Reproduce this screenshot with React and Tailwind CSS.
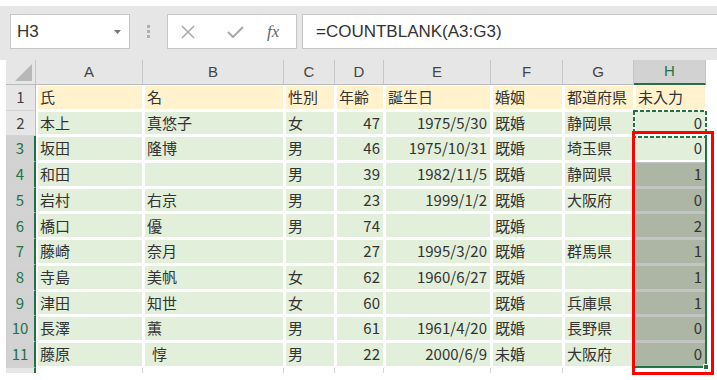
import clsx from "clsx";

const cols = ["A", "B", "C", "D", "E", "F", "G", "H"];
const widths = ["w-[107px]", "w-[141px]", "w-[51px]", "w-[49px]", "w-[107px]", "w-[72px]", "w-[71px]", "w-[72px]"];

const header = ["氏", "名", "性別", "年齢", "誕生日", "婚姻", "都道府県", "未入力"];

const rows = [
  ["本上", "真悠子", "女", 47, "1975/5/30", "既婚", "静岡県", 0],
  ["坂田", "隆博", "男", 46, "1975/10/31", "既婚", "埼玉県", 0],
  ["和田", "", "男", 39, "1982/11/5", "既婚", "静岡県", 1],
  ["岩村", "右京", "男", 23, "1999/1/2", "既婚", "大阪府", 0],
  ["橋口", "優", "男", 74, "", "既婚", "", 2],
  ["藤崎", "奈月", "", 27, "1995/3/20", "既婚", "群馬県", 1],
  ["寺島", "美帆", "女", 62, "1960/6/27", "既婚", "", 1],
  ["津田", "知世", "女", 60, "", "既婚", "兵庫県", 1],
  ["長澤", "薫", "男", 61, "1961/4/20", "既婚", "長野県", 0],
  ["藤原", "惇", "男", 22, "2000/6/9", "未婚", "大阪府", 0],
];

const rightAligned = [3, 4, 7];

function RowHeader({ n, selected }) {
  return (
    <div
      className={clsx(
        "w-[30px] h-full shrink-0 flex items-center justify-center border-b border-[#d4d4d4] text-[15px]",
        selected
          ? "bg-[#d2d2d2] text-[#217346] border-r-2 border-r-[#217346]"
          : "bg-[#e6e6e6] text-[#444] border-r border-r-[#bdbdbd]"
      )}
    >
      {n}
    </div>
  );
}

function Cell({ value, col, header, row }) {
  const inSel = col === 7 && row >= 4;
  return (
    <div
      className={clsx(
        "h-full shrink-0 flex items-center border-l-2 border-r border-t border-b-2 whitespace-nowrap",
        widths[col],
        header ? "bg-[#fff2cc]" : inSel ? "bg-[#adb5a4]" : "bg-[#e2efda]",
        inSel ? "border-[#c4c4c4]" : "border-white",
        !header && rightAligned.includes(col) ? "justify-end pr-[3px]" : "pl-[2px]",
        col === 1 && row === 11 && "pl-[7px]"
      )}
    >
      {value}
    </div>
  );
}

export default function App() {
  return (
    <div className="w-[717px] h-[380px] bg-white overflow-hidden relative font-['Liberation_Sans',sans-serif]">
      <div className="h-[6px] bg-white" />

      {/* formula bar */}
      <div className="h-[54px] bg-[#e6e6e6] flex items-start pt-[8px] pl-[10px] gap-0">
        <div className="w-[120px] h-[35px] bg-white border border-[#c6c6c6] flex items-center pl-[6px] pr-[8px] justify-between">
          <span className="text-[17px] text-[#333]">H3</span>
          <svg width="7" height="4" viewBox="0 0 7 4">
            <polygon points="0,0 7,0 3.5,4" fill="#777" />
          </svg>
        </div>
        <div className="w-[37px] h-[35px] flex items-center justify-center">
          <svg width="3" height="13" viewBox="0 0 3 13">
            <rect x="0" y="0" width="3" height="3" fill="#b0b0b0" />
            <rect x="0" y="5" width="3" height="3" fill="#b0b0b0" />
            <rect x="0" y="10" width="3" height="3" fill="#b0b0b0" />
          </svg>
        </div>
        <div className="w-[130px] h-[35px] bg-white border border-[#c6c6c6] flex items-center">
          <svg width="14" height="14" viewBox="0 0 14 14" className="ml-[13px]">
            <path d="M1 1 L13 13 M13 1 L1 13" stroke="#a8a8a8" strokeWidth="1.5" fill="none" />
          </svg>
          <svg width="17" height="12" viewBox="0 0 17 12" className="ml-[32px]">
            <path d="M1 6 L6 11 L16 1" stroke="#a8a8a8" strokeWidth="2" fill="none" />
          </svg>
          <span className="ml-[23px] text-[17px] italic text-[#666] font-['Liberation_Serif',serif]">fx</span>
        </div>
        <div className="ml-[5px] flex-1 h-[35px] bg-white border border-r-0 border-[#c6c6c6] flex items-center pl-[13px]">
          <span className="text-[17px] text-[#333]">=COUNTBLANK(A3:G3)</span>
        </div>
      </div>

      {/* column headers */}
      <div className="flex h-[25px] pl-[6px]">
        <div className="w-[30px] h-full bg-[#e6e6e6] border-b border-[#bcbcbc] border-r border-r-[#c6c6c6] flex items-end justify-end pr-[3px] pb-[3px]">
          <svg width="17" height="17" viewBox="0 0 17 17">
            <polygon points="17,0 17,17 0,17" fill="#b8b8b8" />
          </svg>
        </div>
        {cols.map((c, i) => (
          <div
            key={c}
            className={clsx(
              "h-full shrink-0 flex items-center justify-center text-[15px] border-r",
              widths[i],
              c === "H"
                ? "bg-[#d2d2d2] text-[#217346] border-b-2 border-b-[#217346] border-r-[#c6c6c6]"
                : "bg-[#e6e6e6] text-[#444] border-b border-b-[#bcbcbc] border-r-[#c6c6c6]"
            )}
          >
            {c}
          </div>
        ))}
      </div>

      {/* grid */}
      <div className="pl-[6px] font-['Noto_Sans_CJK_JP',sans-serif] text-[15px] text-[#333]">
        <div className="flex h-[25.7px]">
          <RowHeader n={1} />
          {header.map((v, i) => (
            <Cell key={i} value={v} col={i} header row={1} />
          ))}
        </div>
        {rows.map((r, ri) => (
          <div key={ri} className="flex h-[25.7px]">
            <RowHeader n={ri + 2} selected={ri + 2 >= 3} />
            {r.map((v, i) => (
              <Cell key={i} value={v} col={i} row={ri + 2} />
            ))}
          </div>
        ))}
        <div className="flex h-[5px]">
          <div className="w-[30px] h-full bg-[#e6e6e6] border-r-2 border-r-[#217346]" />
          {widths.map((w, i) => (
            <div key={i} className={clsx("h-full shrink-0 bg-white border-r border-[#d4d4d4]", w)} />
          ))}
        </div>
      </div>

      {/* copy marquee around H2 */}
      <svg className="absolute left-[633px] top-[110px]" width="74" height="28" viewBox="0 0 74 28">
        <rect x="1" y="1" width="72" height="26" fill="none" stroke="#217346" strokeWidth="2" strokeDasharray="4 2" />
      </svg>

      {/* selection H3:H11 */}
      <div className="absolute left-[633px] top-[137px] w-[74px] h-[231px] border-2 border-t-0 border-[#217346]" />
      <div className="absolute left-[703px] top-[364px] w-[6px] h-[6px] bg-[#217346] border border-white" />

      {/* red highlight */}
      <div className="absolute left-[632px] top-[131px] w-[82px] h-[244px] border-[3px] border-[#ff0000]" />
    </div>
  );
}
